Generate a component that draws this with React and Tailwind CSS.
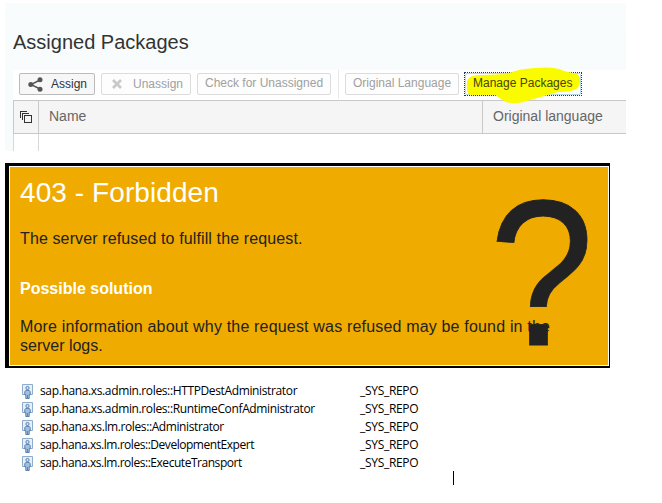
const roles = [
  { name: 'sap.hana.xs.admin.roles::HTTPDestAdministrator', owner: '_SYS_REPO', tracking: 'tracking-[-0.365px]' },
  { name: 'sap.hana.xs.admin.roles::RuntimeConfAdministrator', owner: '_SYS_REPO', tracking: 'tracking-[-0.365px]' },
  { name: 'sap.hana.xs.lm.roles::Administrator', owner: '_SYS_REPO', tracking: 'tracking-[-0.4px]' },
  { name: 'sap.hana.xs.lm.roles::DevelopmentExpert', owner: '_SYS_REPO', tracking: 'tracking-[-0.46px]' },
  { name: 'sap.hana.xs.lm.roles::ExecuteTransport', owner: '_SYS_REPO', tracking: 'tracking-[-0.46px]' },
];

function ShareIcon() {
  return (
    <svg width="15" height="15" viewBox="0 0 15 15" className="shrink-0" fill="#555" stroke="#555">
      <path d="M12 3 3 7.5 12 12" fill="none" strokeWidth="1.4" />
      <circle cx="2.8" cy="7.5" r="2.5" stroke="none" />
      <circle cx="12" cy="2.8" r="2.5" stroke="none" />
      <circle cx="12" cy="12.2" r="2.5" stroke="none" />
    </svg>
  );
}

function CrossIcon() {
  return (
    <svg width="10" height="10" viewBox="0 0 10 10" className="shrink-0" stroke="#c9c9c9" strokeWidth="2.8">
      <path d="M1 1 9 9M9 1 1 9" />
    </svg>
  );
}

function StackIcon() {
  return (
    <svg width="12" height="12" viewBox="0 0 12 12" fill="none" stroke="#333" shapeRendering="crispEdges">
      <path d="M.5 7V.5H7M2.5 9V2.5H9" />
      <path d="M4.5 4.5h7v7h-7z" />
    </svg>
  );
}

function RoleIcon() {
  return (
    <svg width="11" height="15" viewBox="0 0 11 15" className="shrink-0">
      <path d="M.5.5h10v10h-10z" fill="#e6f0fa" stroke="#8eaccb" />
      <circle cx="5.5" cy="4" r="1.6" fill="#d3e5f8" stroke="#4f76a3" strokeWidth=".9" />
      <path d="M3.8 6.4h3.4l1 1.2v3.2h-1v3.7H3.8v-3.7h-1V7.6z" fill="#9fc0e2" stroke="#4f76a3" strokeWidth=".9" />
      <path d="M5.5 11v3" stroke="#4f76a3" strokeWidth=".8" />
    </svg>
  );
}

function Button({ className, children }) {
  return (
    <div className={`flex h-[22px] shrink-0 rounded-[2px] border pt-[2px] text-[12px] leading-[15px] whitespace-nowrap ${className}`}>
      {children}
    </div>
  );
}

function PackagesPanel() {
  return (
    <section className="flex h-[148px] w-[621px] flex-col bg-linear-to-b from-[#f9fcfd] to-[#f7fbfc]">
      <h1 className="h-[67px] pt-[27px] pl-2 text-[20px] leading-6 text-[#333] whitespace-nowrap">Assigned Packages</h1>
      <div className="ml-2 flex flex-1 flex-col bg-white">
        <div className="flex h-[30px] pt-[3px] pl-[6px]">
          <Button className="w-[76px] gap-[8px] border-[#bbb] bg-[#f7f7f7] pl-2 text-[#333]">
            <span className="pt-px"><ShareIcon /></span>
            <span className="pt-px">Assign</span>
          </Button>
          <Button className="ml-[6px] w-[90px] gap-[11px] border-[#dcdcdc] bg-[#fdfdfd] pl-[10px] text-[#a0a0a0]">
            <span className="pt-[3px]"><CrossIcon /></span>
            <span className="pt-px">Unassign</span>
          </Button>
          <Button className="ml-[6px] w-[134px] border-[#dcdcdc] bg-[#fdfdfd] pl-[7px] text-[#a0a0a0]">Check for Unassigned</Button>
          <div className="-mt-[3px] ml-[7px] h-[28px] w-px bg-[#e8e8e8]" />
          <Button className="ml-[6px] w-[114px] border-[#dcdcdc] bg-[#fdfdfd] pl-[7px] text-[#a0a0a0]">Original Language</Button>
          <div className="relative -mt-px ml-[5px] h-6 w-[118px] border border-dotted border-[#123c70]">
            <div className="h-full w-full rounded-[2px] border border-[#b9d8e8]" />
            <svg className="absolute top-[-7px] left-0" width="118" height="40" viewBox="0 0 118 40">
              <path d="M2 15Q4 8 18 9L42 8Q52 3 70 2Q91 0 99 5L112 8Q117 12 114 20Q111 26 93 26Q80 30 65 34Q45 41 36 33L30 29H5Q1 28 2 15Z" fill="#fbfb00" />
            </svg>
            <span className="absolute top-[3px] left-2 text-[12px] leading-[15px] text-[#454500] whitespace-nowrap">Manage Packages</span>
          </div>
        </div>
        <div className="flex h-[34px] border-y border-l border-[#c9c9c9] bg-[#f5f5f5] text-[14px] leading-[30px] text-[#666]">
          <div className="flex w-[25px] items-center justify-center border-r border-[#c9c9c9]"><StackIcon /></div>
          <div className="w-[444px] border-r border-[#c9c9c9] pl-[10px]">Name</div>
          <div className="pl-[10px] whitespace-nowrap">Original language</div>
        </div>
        <div className="flex-1 border-l border-[#d8d8d8]">
          <div className="h-full w-[25px] border-r border-[#d8d8d8]" />
        </div>
      </div>
    </section>
  );
}

function ErrorPanel() {
  return (
    <section className="mt-3 h-[205px] w-[605px] border-t-[3px] border-r border-b-2 border-l-4 border-black">
      <div className="relative h-full border border-white bg-[#efab00] pl-[10px] text-[16px] leading-[19px] text-[#222] whitespace-nowrap">
        <h2 className="pt-[10px] text-[28px] leading-8 tracking-[0.08px] text-white">403 - Forbidden</h2>
        <p className="mt-[20px] tracking-[0.12px]">The server refused to fulfill the request.</p>
        <h3 className="mt-[31px] font-bold text-white">Possible solution</h3>
        <p className="mt-[19px]"><span className="tracking-[0.178px]">More information about why the request was refused may be found in the</span><br />server logs.</p>
        <span className="absolute top-[-8px] left-[474px] scale-x-[0.91] text-[207px] leading-[230px] text-[#222] [-webkit-text-stroke:0.8px_#222]">?</span>
      </div>
    </section>
  );
}

export default function App() {
  return (
    <main className="h-[503px] w-[662px] overflow-hidden bg-white pt-[3px] pl-[5px] font-['Liberation_Sans',Arial,sans-serif]">
      <PackagesPanel />
      <ErrorPanel />
      <ul className="mt-[14px] pl-[17px] font-['Open_Sans','Noto_Sans',sans-serif] text-[12px] leading-[18px] text-black">
        {roles.map((r) => (
          <li key={r.name} className="flex h-[18px] items-center whitespace-nowrap">
            <RoleIcon />
            <span className={`ml-[7px] w-[320px] ${r.tracking}`}>{r.name}</span>
            <span className="tracking-[-0.3px]">{r.owner}</span>
          </li>
        ))}
      </ul>
      <div className="-mt-px ml-[448px] h-[14px] w-px bg-black" />
    </main>
  );
}
